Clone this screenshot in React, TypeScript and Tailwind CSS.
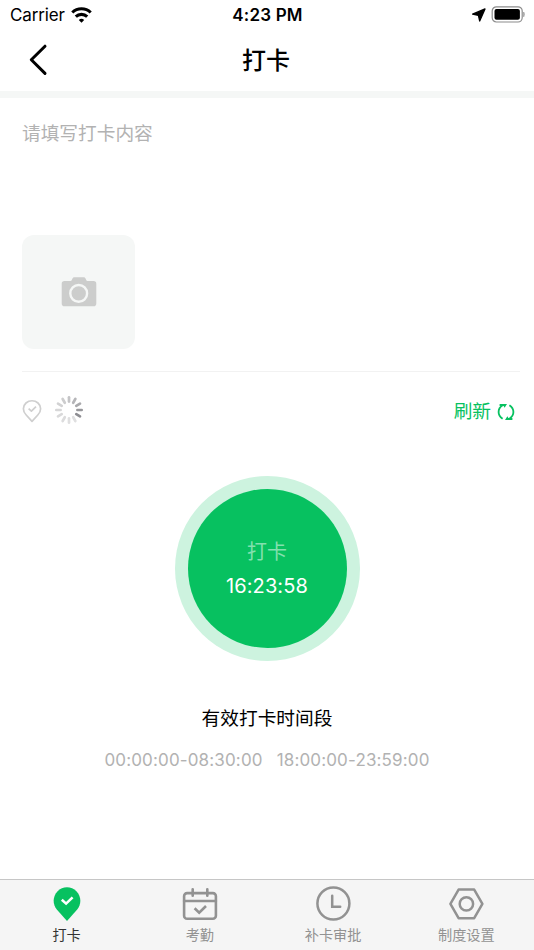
const GREEN = '#07c160';

const StatusBar = () => {
    return (
        <div className="flex h-[30px] items-center justify-between pl-[10px] pr-[9px] text-[17px] leading-[30px] text-black">
            <div className="flex flex-1 items-center gap-[6px]">
                <span className="tracking-[-0.15px]">Carrier</span>
                <svg width="21" height="16" viewBox="0 0 21 16" fill="none" stroke="#000" strokeWidth="3.1">
                    <path d="M1.3 5.5 A13.2 13.2 0 0 1 19.7 5.5" />
                    <path d="M4.8 9.7 A8.2 8.2 0 0 1 16.2 9.7" />
                    <path d="M10.5 15.7 L7.8 13 A4.1 4.1 0 0 1 13.2 13 Z" fill="#000" stroke="none" />
                </svg>
            </div>
            <span className="font-semibold tracking-[0.2px]">4:23 PM</span>
            <div className="flex flex-1 items-center justify-end gap-[5px]">
                <svg width="15" height="14" viewBox="0 0 15 14">
                    <path d="M14 0.9 L8.7 13 L7.4 7.4 L1.6 6.2 Z" fill="#000" stroke="#000" strokeWidth="1.3" strokeLinejoin="round" />
                </svg>
                <svg className="-mt-[2px]" width="34" height="17" viewBox="0 0 34 17">
                    <rect x="1.2" y="0.8" width="30" height="15.2" rx="4.2" fill="#fff" stroke="#8c8c8c" strokeWidth="1.2" />
                    <rect x="3.5" y="3.1" width="25.4" height="10.6" rx="2" fill="#000" />
                    <path d="M32.7 6 Q34 8.4 32.7 10.8 Z" fill="#8c8c8c" stroke="#8c8c8c" strokeWidth="0.6" />
                </svg>
            </div>
        </div>
    );
};

const Header = () => {
    return (
        <div className="grid h-[61px] grid-cols-3 items-center">
            <svg className="-mt-[2px] ml-[28px]" width="20" height="32" viewBox="0 0 20 32" fill="none" stroke="#000" strokeWidth="3" strokeLinecap="round" strokeLinejoin="round">
                <path d="M17 2.2 L3.3 15.8 L17 29.4" />
            </svg>
            <h1 className="-ml-[2px] pt-px text-center text-[24px] font-medium leading-[60px] text-black">打卡</h1>
        </div>
    );
};

const CameraIcon = () => (
    <svg className="-mt-px" width="36" height="32" viewBox="0 0 36 32">
        <path d="M3.5 5 H9.5 Q10.4 5 10.8 4 L11.6 2.2 Q12 1.2 13.2 1.2 H22.8 Q24 1.2 24.4 2.2 L25.2 4 Q25.6 5 26.5 5 H32.5 Q35.3 5 35.3 7.8 V27.4 Q35.3 30.2 32.5 30.2 H3.5 Q0.7 30.2 0.7 27.4 V7.8 Q0.7 5 3.5 5 Z" fill="#cccdcc" />
        <circle cx="17.7" cy="17.4" r="8.4" fill="none" stroke="#f5f7f6" strokeWidth="2.4" />
    </svg>
);

const spokes = ['#c4c4c6', '#b5b5b8', '#a9a9ac', '#97979b', '#8d8d92', '#dfdfe0', '#dfdfe0', '#dcdcdd', '#d9d9da', '#d7d7d8', '#d2d2d3', '#cdcdce'];

const Spinner = () => (
    <svg width="30" height="30" viewBox="-15 -15 30 30" strokeWidth="2.7" strokeLinecap="round">
        {spokes.map((color, i) => (
            <path key={i} d="M0 -12.7 V-8.4" stroke={color} transform={`rotate(${i * 30})`} />
        ))}
    </svg>
);

const LocationRow = () => {
    return (
        <div className="mt-[22px] flex h-[32px] items-center">
            <svg className="mt-px" width="20" height="24" viewBox="0 0 20 24" fill="none" stroke="#cfcfcf" strokeWidth="1.7" strokeLinejoin="round">
                <path d="M10 22.4 L4.2 16 C0.4 12.2 0.6 7.1 4 4 C7.4 1 12.6 1 16 4 C19.4 7.1 19.6 12.2 15.8 16 Z" />
                <path d="M6.6 9.7 L9.4 12.2 L14 7.7" />
            </svg>
            <div className="ml-[11.5px]">
                <Spinner />
            </div>
            <div className="ml-auto mr-[5px] flex items-center gap-[6px] pt-[3px] text-[18.7px] leading-[30px] text-[#07c160]">
                <span>刷新</span>
                <svg width="18" height="18" viewBox="0 0 18 18" fill="none" stroke={GREEN} strokeWidth="1.8">
                    <path d="M5.6 15.8 C0.2 12.2 0.4 5.6 5.4 2.6" />
                    <path d="M2.6 1 H10 L7.6 4.8 L6.6 2.9 H2.6 Z" fill={GREEN} stroke="none" />
                    <path d="M12.4 2.2 C17.8 5.8 17.6 12.4 12.6 15.4" />
                    <path d="M15.4 17 H8 L10.4 13.2 L11.4 15.1 H15.4 Z" fill={GREEN} stroke="none" />
                </svg>
            </div>
        </div>
    );
};

const tabs = [
    {
        label: '打卡',
        active: true,
        icon: (
            <>
                <path d="M18 35 L7.8 23.5 C3.4 18.2 3.6 10.5 8.4 5.4 C13.7 -0.2 22.3 -0.2 27.6 5.4 C32.4 10.5 32.6 18.2 28.2 23.5 Z" fill={GREEN} />
                <path d="M12.8 13.8 L17.1 17.6 L23.6 11.4" fill="none" stroke="#fff" strokeWidth="2.6" />
            </>
        ),
    },
    {
        label: '考勤',
        active: false,
        icon: (
            <g fill="none" stroke="#929292" strokeWidth="2.6" strokeLinecap="round">
                <rect x="2.1" y="7.1" width="31.8" height="25.6" rx="3" />
                <path d="M2.1 15 H33.9 M10.7 3.3 V9.8 M25.3 3.3 V9.8" />
                <path d="M12.6 22.3 L17.2 26.7 L24 20" strokeLinecap="butt" />
            </g>
        ),
    },
    {
        label: '补卡审批',
        active: false,
        icon: (
            <g fill="none" stroke="#929292" strokeWidth="2.5" strokeLinecap="round">
                <circle cx="18.4" cy="17.5" r="16" />
                <path d="M17.2 9.8 V20.8 H25.2" />
            </g>
        ),
    },
    {
        label: '制度设置',
        active: false,
        icon: (
            <g fill="none" stroke="#929292" strokeWidth="2.5" strokeLinejoin="round">
                <path d="M10.6 3.6 H26.2 L34.4 17.8 L26.2 32.2 H10.6 L2.4 17.8 Z" />
                <circle cx="18.4" cy="17.9" r="6.7" />
            </g>
        ),
    },
];

const TabBar = () => {
    return (
        <div className="grid h-[71px] grid-cols-4 border-t border-[#c6c6c6] bg-[#f5f5f5] pr-px">
            {tabs.map((tab) => (
                <div key={tab.label} className="flex flex-col items-center pt-[6px]">
                    <svg width="36" height="36" viewBox="0 0 36 36">{tab.icon}</svg>
                    <span className={tab.active ? 'mt-[3px] text-[14.2px] leading-5 text-[#333333]' : 'mt-[3px] text-[14.2px] leading-5 text-[#929292]'}>{tab.label}</span>
                </div>
            ))}
        </div>
    );
};

const App = () => {
    return (
        <div className="flex h-[950px] w-[534px] flex-col overflow-hidden bg-white font-[Inter,'Noto_Sans_CJK_SC',sans-serif]">
            <StatusBar />
            <Header />
            <div className="h-[7px] bg-[#f5f7f6]" />

            <main className="flex flex-1 flex-col pl-[22px] pr-[14px]">
                <p className="mt-[21px] h-[116px] text-[18.7px] leading-[30px] text-[#b2b2b2]">请填写打卡内容</p>
                <div className="flex h-[114px] w-[113px] items-center justify-center rounded-[12px] bg-[#f5f7f6]">
                    <CameraIcon />
                </div>
                <div className="mt-[22px] h-px bg-[#f2f2f2]" />
                <LocationRow />
            </main>

            <section className="flex h-[404px] flex-col items-center">
                <div className="mt-[0.5px] flex size-[185px] items-center justify-center rounded-full bg-[#cdf3df]">
                    <div className="flex size-[159px] flex-col items-center justify-center rounded-full bg-[#07c160] pt-[2px]">
                        <span className="text-[20px] leading-[34px] text-[#83e0af]">打卡</span>
                        <span className="text-[20px] leading-[34px] tracking-[0.1px] text-white">16:23:58</span>
                    </div>
                </div>
                <h2 className="mt-[43px] text-[18.7px] leading-[30px] text-black">有效打卡时间段</h2>
                <div className="mt-[11px] flex gap-[14px] text-[17px] leading-[30px] tracking-[0.15px] text-[#b2b2b2]">
                    <span>00:00:00-08:30:00</span>
                    <span>18:00:00-23:59:00</span>
                </div>
            </section>
            <TabBar />
        </div>
    );
};

export default App;
